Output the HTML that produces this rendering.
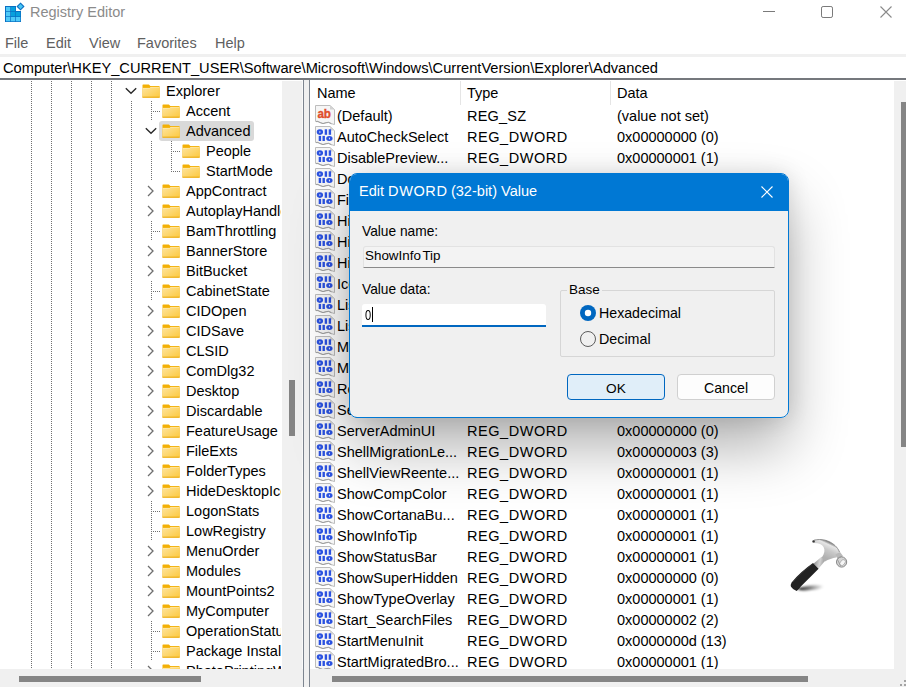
<!DOCTYPE html>
<html><head><meta charset="utf-8"><style>
*{margin:0;padding:0;box-sizing:border-box}
html,body{width:906px;height:687px;overflow:hidden;background:#fff;font-family:"Liberation Sans", sans-serif;position:relative}
div,svg{position:absolute}
.tb{left:30px;top:1px;line-height:23px;font-size:14.5px;color:#8b8b8b;white-space:nowrap}
.mn{top:31px;line-height:25px;font-size:14.5px;color:#606060;white-space:nowrap}
#addr{left:0;top:57px;width:906px;height:21px;background:#fff}
#addr .at{left:3px;top:1px;line-height:20px;font-size:14.65px;color:#000;white-space:nowrap}
#tree{left:0;top:81px;width:281px;height:588px;overflow:hidden;background:#fff}
#tree>*{}
.vd{width:1px;background:repeating-linear-gradient(to bottom,#707070 0 1px,transparent 1px 2px)}
.hd{height:1px;background:repeating-linear-gradient(to right,#707070 0 1px,transparent 1px 2px)}
.tt{line-height:20px;font-size:14.5px;color:#000;white-space:nowrap}
.sel{background:#d9d9d9;border-radius:3px}
#list{left:310px;top:81px;width:584px;height:588px;overflow:hidden;background:#fff}
.lt{line-height:21px;font-size:14.5px;color:#000;white-space:nowrap}
.dt{font-size:13.5px;line-height:19px;color:#000;white-space:nowrap}
.hsep{top:81px;width:1px;height:24px;background:#e5e5e5}
</style></head><body>
<svg width="0" height="0" style="position:absolute"><defs>
<linearGradient id="fg" x1="0" y1="0" x2="1" y2="1"><stop offset="0" stop-color="#fee49e"/><stop offset="1" stop-color="#fcc93f"/></linearGradient>
<g id="page"><path d="M0.5 0.5 H15 L19.5 4.6 V19.6 L16.5 18.6 Q13.5 16.4 11 17.6 Q8 19.4 5 17.4 Q2.5 15.6 0.5 16.4 Z" fill="#f6f6f6" stroke="#bdbdbd" stroke-width="1"/><path d="M15 0.5 V4.6 H19.5 Z" fill="#d2d2d2"/><path d="M1 16.6 Q3 16 5 17.6 Q8 19.6 11 17.8 Q13.5 16.6 16.5 18.8" fill="none" stroke="#9a9a9a" stroke-width="0.9"/></g>
<g id="bin" fill="#2b52e0"><path fill-rule="evenodd" d="M4.9 3.3 C7.2 3.3 8.1 4.6 8.1 6.1 C8.1 7.6 7.2 8.9 4.9 8.9 C2.6 8.9 1.7 7.6 1.7 6.1 C1.7 4.6 2.6 3.3 4.9 3.3 Z M4.9 5 C4.6 5 4.4 5.5 4.4 6.1 C4.4 6.7 4.6 7.2 4.9 7.2 C5.2 7.2 5.4 6.7 5.4 6.1 C5.4 5.5 5.2 5 4.9 5 Z"/><rect x="9.7" y="3.3" width="2.4" height="5.5"/><rect x="13.7" y="3.3" width="2.4" height="5.5"/><rect x="3.7" y="9.9" width="2.4" height="5.1"/><rect x="7.5" y="9.9" width="2.4" height="5.1"/><path fill-rule="evenodd" d="M14.4 9.9 C16.7 9.9 17.6 11.1 17.6 12.45 C17.6 13.8 16.7 15 14.4 15 C12.1 15 11.2 13.8 11.2 12.45 C11.2 11.1 12.1 9.9 14.4 9.9 Z M14.4 11.5 C14.1 11.5 13.9 11.9 13.9 12.45 C13.9 13 14.1 13.4 14.4 13.4 C14.7 13.4 14.9 13 14.9 12.45 C14.9 11.9 14.7 11.5 14.4 11.5 Z"/></g>
</defs></svg>
<!-- title bar -->
<svg style="left:4px;top:1px" width="22" height="22" viewBox="0 0 22 22">
<rect x="1" y="5" width="16" height="16" fill="#0a6fc2"/>
<rect x="2" y="6" width="4.3" height="4.3" fill="#4fc9f7"/><rect x="7" y="6" width="4.3" height="4.3" fill="#08a0dd"/>
<rect x="2" y="11" width="4.3" height="4.3" fill="#4fc9f7"/><rect x="7" y="11" width="4.3" height="4.3" fill="#08a0dd"/><rect x="12" y="11" width="4.3" height="4.3" fill="#08a0dd"/>
<rect x="2" y="16" width="4.3" height="4.3" fill="#4fc9f7"/><rect x="7" y="16" width="4.3" height="4.3" fill="#4fc9f7"/><rect x="12" y="16" width="4.3" height="4.3" fill="#4fc9f7"/>
<rect x="12" y="5" width="5" height="5" fill="#fff"/>
<path d="M16.5 2.2 L19.8 5.5 L16.5 8.8 L13.2 5.5 Z" fill="#48c6f5" stroke="#0a6fc2" stroke-width="1.1"/>
</svg>
<div class="tb">Registry Editor</div>
<svg style="left:763px;top:11px" width="12" height="1"><rect width="12" height="1" fill="#7a7a7a"/></svg>
<svg style="left:821px;top:6px" width="12" height="12" viewBox="0 0 12 12"><rect x="0.5" y="0.5" width="11" height="11" rx="1.6" fill="none" stroke="#7a7a7a" stroke-width="1"/></svg>
<svg style="left:880px;top:6px" width="12" height="12" viewBox="0 0 12 12"><path d="M0.5 0.5 L11.5 11.5 M11.5 0.5 L0.5 11.5" stroke="#8a8a8a" stroke-width="1.1"/></svg>
<!-- menu -->
<div class="mn" style="left:5px">File</div>
<div class="mn" style="left:46px">Edit</div>
<div class="mn" style="left:89px">View</div>
<div class="mn" style="left:137px">Favorites</div>
<div class="mn" style="left:215px">Help</div>
<div style="left:0;top:54px;width:906px;height:3px;background:#f0f0f0"></div>
<div id="addr"><div class="at">Computer\HKEY_CURRENT_USER\Software\Microsoft\Windows\CurrentVersion\Explorer\Advanced</div></div>
<div style="left:0;top:78px;width:906px;height:2px;background:#75787d"></div>
<!-- tree scrollbar & splitter -->
<div style="left:282px;top:81px;width:20px;height:606px;background:#f0f0f0"></div><div style="left:302px;top:80px;width:1px;height:607px;background:#fafafa"></div>
<div style="left:289px;top:380px;width:6px;height:56px;background:#858585"></div>
<div style="left:303px;top:80px;width:1px;height:607px;background:#7d8590"></div>
<div style="left:304px;top:80px;width:5px;height:607px;background:#f0f0f0"></div>
<div style="left:309px;top:80px;width:1px;height:607px;background:#7d8590"></div>
<!-- bottom scrollbars -->
<div style="left:0;top:669px;width:303px;height:18px;background:#f0f0f0"></div>
<div style="left:19px;top:676px;width:182px;height:6px;background:#858585"></div>
<div style="left:310px;top:669px;width:596px;height:18px;background:#f0f0f0"></div>
<div style="left:332px;top:676px;width:476px;height:6px;background:#858585"></div>
<div style="left:894px;top:81px;width:12px;height:606px;background:#f0f0f0"></div>
<div style="left:901px;top:102px;width:5px;height:345px;background:#858585"></div>
<div id="tree"><div style="left:0;top:-81px"><div class="vd" style="left:31px;top:81px;height:588px"></div><div class="vd" style="left:51px;top:81px;height:588px"></div><div class="vd" style="left:71px;top:81px;height:588px"></div><div class="vd" style="left:91px;top:81px;height:588px"></div><div class="vd" style="left:111px;top:81px;height:588px"></div><div class="vd" style="left:131px;top:101px;height:568px"></div><svg class="ch" style="left:125px;top:87px" width="12" height="8" viewBox="0 0 12 8"><path d="M0.8 1.2 L6 6.2 L11.2 1.2" fill="none" stroke="#2a2a2a" stroke-width="1.4"/></svg><svg class="fd" style="left:142px;top:84px" width="18" height="14" viewBox="0 0 18 14"><path d="M0.5 1.1 Q0.5 0.4 1.1 0.4 H6.9 L8.3 2 H17 Q17.6 2 17.6 2.6 V13 Q17.6 13.6 17 13.6 H1.1 Q0.5 13.6 0.5 13 Z" fill="#f3b006"/><path d="M0.5 4 H7.6 L8.7 3 H17.6 V13 Q17.6 13.6 17 13.6 H1.1 Q0.5 13.6 0.5 13 Z" fill="url(#fg)"/><path d="M0.6 4.3 H7.7 L8.8 3.3 H17.4" stroke="#fff1c4" stroke-width="0.6" fill="none" opacity="0.8"/><rect x="0.5" y="12.7" width="17.1" height="0.9" fill="#e8a70e"/></svg><div class="tt" style="left:166px;top:81px">Explorer</div><div class="vd" style="left:151px;top:101px;height:20px"></div><div class="hd" style="left:153px;top:111px;width:8px"></div><svg class="fd" style="left:162px;top:104px" width="18" height="14" viewBox="0 0 18 14"><path d="M0.5 1.1 Q0.5 0.4 1.1 0.4 H6.9 L8.3 2 H17 Q17.6 2 17.6 2.6 V13 Q17.6 13.6 17 13.6 H1.1 Q0.5 13.6 0.5 13 Z" fill="#f3b006"/><path d="M0.5 4 H7.6 L8.7 3 H17.6 V13 Q17.6 13.6 17 13.6 H1.1 Q0.5 13.6 0.5 13 Z" fill="url(#fg)"/><path d="M0.6 4.3 H7.7 L8.8 3.3 H17.4" stroke="#fff1c4" stroke-width="0.6" fill="none" opacity="0.8"/><rect x="0.5" y="12.7" width="17.1" height="0.9" fill="#e8a70e"/></svg><div class="tt" style="left:186px;top:101px">Accent</div><div class="sel" style="left:159px;top:121px;width:95px;height:20px"></div><svg class="ch" style="left:145px;top:127px" width="12" height="8" viewBox="0 0 12 8"><path d="M0.8 1.2 L6 6.2 L11.2 1.2" fill="none" stroke="#2a2a2a" stroke-width="1.4"/></svg><svg class="fd" style="left:162px;top:124px" width="18" height="14" viewBox="0 0 18 14"><path d="M0.5 1.1 Q0.5 0.4 1.1 0.4 H6.9 L8.3 2 H17 Q17.6 2 17.6 2.6 V13 Q17.6 13.6 17 13.6 H1.1 Q0.5 13.6 0.5 13 Z" fill="#f3b006"/><path d="M0.5 4 H7.6 L8.7 3 H17.6 V13 Q17.6 13.6 17 13.6 H1.1 Q0.5 13.6 0.5 13 Z" fill="url(#fg)"/><path d="M0.6 4.3 H7.7 L8.8 3.3 H17.4" stroke="#fff1c4" stroke-width="0.6" fill="none" opacity="0.8"/><rect x="0.5" y="12.7" width="17.1" height="0.9" fill="#e8a70e"/></svg><div class="tt" style="left:186px;top:121px">Advanced</div><div class="vd" style="left:171px;top:141px;height:20px"></div><div class="hd" style="left:173px;top:151px;width:8px"></div><div class="vd" style="left:151px;top:141px;height:20px"></div><svg class="fd" style="left:182px;top:144px" width="18" height="14" viewBox="0 0 18 14"><path d="M0.5 1.1 Q0.5 0.4 1.1 0.4 H6.9 L8.3 2 H17 Q17.6 2 17.6 2.6 V13 Q17.6 13.6 17 13.6 H1.1 Q0.5 13.6 0.5 13 Z" fill="#f3b006"/><path d="M0.5 4 H7.6 L8.7 3 H17.6 V13 Q17.6 13.6 17 13.6 H1.1 Q0.5 13.6 0.5 13 Z" fill="url(#fg)"/><path d="M0.6 4.3 H7.7 L8.8 3.3 H17.4" stroke="#fff1c4" stroke-width="0.6" fill="none" opacity="0.8"/><rect x="0.5" y="12.7" width="17.1" height="0.9" fill="#e8a70e"/></svg><div class="tt" style="left:206px;top:141px">People</div><div class="vd" style="left:171px;top:161px;height:11px"></div><div class="hd" style="left:173px;top:171px;width:8px"></div><div class="vd" style="left:151px;top:161px;height:20px"></div><svg class="fd" style="left:182px;top:164px" width="18" height="14" viewBox="0 0 18 14"><path d="M0.5 1.1 Q0.5 0.4 1.1 0.4 H6.9 L8.3 2 H17 Q17.6 2 17.6 2.6 V13 Q17.6 13.6 17 13.6 H1.1 Q0.5 13.6 0.5 13 Z" fill="#f3b006"/><path d="M0.5 4 H7.6 L8.7 3 H17.6 V13 Q17.6 13.6 17 13.6 H1.1 Q0.5 13.6 0.5 13 Z" fill="url(#fg)"/><path d="M0.6 4.3 H7.7 L8.8 3.3 H17.4" stroke="#fff1c4" stroke-width="0.6" fill="none" opacity="0.8"/><rect x="0.5" y="12.7" width="17.1" height="0.9" fill="#e8a70e"/></svg><div class="tt" style="left:206px;top:161px">StartMode</div><svg class="ch" style="left:147px;top:185px" width="8" height="12" viewBox="0 0 8 12"><path d="M1 1 L6 6 L1 11" fill="none" stroke="#6e6e6e" stroke-width="1.3"/></svg><svg class="fd" style="left:162px;top:184px" width="18" height="14" viewBox="0 0 18 14"><path d="M0.5 1.1 Q0.5 0.4 1.1 0.4 H6.9 L8.3 2 H17 Q17.6 2 17.6 2.6 V13 Q17.6 13.6 17 13.6 H1.1 Q0.5 13.6 0.5 13 Z" fill="#f3b006"/><path d="M0.5 4 H7.6 L8.7 3 H17.6 V13 Q17.6 13.6 17 13.6 H1.1 Q0.5 13.6 0.5 13 Z" fill="url(#fg)"/><path d="M0.6 4.3 H7.7 L8.8 3.3 H17.4" stroke="#fff1c4" stroke-width="0.6" fill="none" opacity="0.8"/><rect x="0.5" y="12.7" width="17.1" height="0.9" fill="#e8a70e"/></svg><div class="tt" style="left:186px;top:181px">AppContract</div><svg class="ch" style="left:147px;top:205px" width="8" height="12" viewBox="0 0 8 12"><path d="M1 1 L6 6 L1 11" fill="none" stroke="#6e6e6e" stroke-width="1.3"/></svg><svg class="fd" style="left:162px;top:204px" width="18" height="14" viewBox="0 0 18 14"><path d="M0.5 1.1 Q0.5 0.4 1.1 0.4 H6.9 L8.3 2 H17 Q17.6 2 17.6 2.6 V13 Q17.6 13.6 17 13.6 H1.1 Q0.5 13.6 0.5 13 Z" fill="#f3b006"/><path d="M0.5 4 H7.6 L8.7 3 H17.6 V13 Q17.6 13.6 17 13.6 H1.1 Q0.5 13.6 0.5 13 Z" fill="url(#fg)"/><path d="M0.6 4.3 H7.7 L8.8 3.3 H17.4" stroke="#fff1c4" stroke-width="0.6" fill="none" opacity="0.8"/><rect x="0.5" y="12.7" width="17.1" height="0.9" fill="#e8a70e"/></svg><div class="tt" style="left:186px;top:201px">AutoplayHandlers</div><div class="vd" style="left:151px;top:221px;height:20px"></div><div class="hd" style="left:153px;top:231px;width:8px"></div><svg class="fd" style="left:162px;top:224px" width="18" height="14" viewBox="0 0 18 14"><path d="M0.5 1.1 Q0.5 0.4 1.1 0.4 H6.9 L8.3 2 H17 Q17.6 2 17.6 2.6 V13 Q17.6 13.6 17 13.6 H1.1 Q0.5 13.6 0.5 13 Z" fill="#f3b006"/><path d="M0.5 4 H7.6 L8.7 3 H17.6 V13 Q17.6 13.6 17 13.6 H1.1 Q0.5 13.6 0.5 13 Z" fill="url(#fg)"/><path d="M0.6 4.3 H7.7 L8.8 3.3 H17.4" stroke="#fff1c4" stroke-width="0.6" fill="none" opacity="0.8"/><rect x="0.5" y="12.7" width="17.1" height="0.9" fill="#e8a70e"/></svg><div class="tt" style="left:186px;top:221px">BamThrottling</div><svg class="ch" style="left:147px;top:245px" width="8" height="12" viewBox="0 0 8 12"><path d="M1 1 L6 6 L1 11" fill="none" stroke="#6e6e6e" stroke-width="1.3"/></svg><svg class="fd" style="left:162px;top:244px" width="18" height="14" viewBox="0 0 18 14"><path d="M0.5 1.1 Q0.5 0.4 1.1 0.4 H6.9 L8.3 2 H17 Q17.6 2 17.6 2.6 V13 Q17.6 13.6 17 13.6 H1.1 Q0.5 13.6 0.5 13 Z" fill="#f3b006"/><path d="M0.5 4 H7.6 L8.7 3 H17.6 V13 Q17.6 13.6 17 13.6 H1.1 Q0.5 13.6 0.5 13 Z" fill="url(#fg)"/><path d="M0.6 4.3 H7.7 L8.8 3.3 H17.4" stroke="#fff1c4" stroke-width="0.6" fill="none" opacity="0.8"/><rect x="0.5" y="12.7" width="17.1" height="0.9" fill="#e8a70e"/></svg><div class="tt" style="left:186px;top:241px">BannerStore</div><svg class="ch" style="left:147px;top:265px" width="8" height="12" viewBox="0 0 8 12"><path d="M1 1 L6 6 L1 11" fill="none" stroke="#6e6e6e" stroke-width="1.3"/></svg><svg class="fd" style="left:162px;top:264px" width="18" height="14" viewBox="0 0 18 14"><path d="M0.5 1.1 Q0.5 0.4 1.1 0.4 H6.9 L8.3 2 H17 Q17.6 2 17.6 2.6 V13 Q17.6 13.6 17 13.6 H1.1 Q0.5 13.6 0.5 13 Z" fill="#f3b006"/><path d="M0.5 4 H7.6 L8.7 3 H17.6 V13 Q17.6 13.6 17 13.6 H1.1 Q0.5 13.6 0.5 13 Z" fill="url(#fg)"/><path d="M0.6 4.3 H7.7 L8.8 3.3 H17.4" stroke="#fff1c4" stroke-width="0.6" fill="none" opacity="0.8"/><rect x="0.5" y="12.7" width="17.1" height="0.9" fill="#e8a70e"/></svg><div class="tt" style="left:186px;top:261px">BitBucket</div><div class="vd" style="left:151px;top:281px;height:20px"></div><div class="hd" style="left:153px;top:291px;width:8px"></div><svg class="fd" style="left:162px;top:284px" width="18" height="14" viewBox="0 0 18 14"><path d="M0.5 1.1 Q0.5 0.4 1.1 0.4 H6.9 L8.3 2 H17 Q17.6 2 17.6 2.6 V13 Q17.6 13.6 17 13.6 H1.1 Q0.5 13.6 0.5 13 Z" fill="#f3b006"/><path d="M0.5 4 H7.6 L8.7 3 H17.6 V13 Q17.6 13.6 17 13.6 H1.1 Q0.5 13.6 0.5 13 Z" fill="url(#fg)"/><path d="M0.6 4.3 H7.7 L8.8 3.3 H17.4" stroke="#fff1c4" stroke-width="0.6" fill="none" opacity="0.8"/><rect x="0.5" y="12.7" width="17.1" height="0.9" fill="#e8a70e"/></svg><div class="tt" style="left:186px;top:281px">CabinetState</div><svg class="ch" style="left:147px;top:305px" width="8" height="12" viewBox="0 0 8 12"><path d="M1 1 L6 6 L1 11" fill="none" stroke="#6e6e6e" stroke-width="1.3"/></svg><svg class="fd" style="left:162px;top:304px" width="18" height="14" viewBox="0 0 18 14"><path d="M0.5 1.1 Q0.5 0.4 1.1 0.4 H6.9 L8.3 2 H17 Q17.6 2 17.6 2.6 V13 Q17.6 13.6 17 13.6 H1.1 Q0.5 13.6 0.5 13 Z" fill="#f3b006"/><path d="M0.5 4 H7.6 L8.7 3 H17.6 V13 Q17.6 13.6 17 13.6 H1.1 Q0.5 13.6 0.5 13 Z" fill="url(#fg)"/><path d="M0.6 4.3 H7.7 L8.8 3.3 H17.4" stroke="#fff1c4" stroke-width="0.6" fill="none" opacity="0.8"/><rect x="0.5" y="12.7" width="17.1" height="0.9" fill="#e8a70e"/></svg><div class="tt" style="left:186px;top:301px">CIDOpen</div><svg class="ch" style="left:147px;top:325px" width="8" height="12" viewBox="0 0 8 12"><path d="M1 1 L6 6 L1 11" fill="none" stroke="#6e6e6e" stroke-width="1.3"/></svg><svg class="fd" style="left:162px;top:324px" width="18" height="14" viewBox="0 0 18 14"><path d="M0.5 1.1 Q0.5 0.4 1.1 0.4 H6.9 L8.3 2 H17 Q17.6 2 17.6 2.6 V13 Q17.6 13.6 17 13.6 H1.1 Q0.5 13.6 0.5 13 Z" fill="#f3b006"/><path d="M0.5 4 H7.6 L8.7 3 H17.6 V13 Q17.6 13.6 17 13.6 H1.1 Q0.5 13.6 0.5 13 Z" fill="url(#fg)"/><path d="M0.6 4.3 H7.7 L8.8 3.3 H17.4" stroke="#fff1c4" stroke-width="0.6" fill="none" opacity="0.8"/><rect x="0.5" y="12.7" width="17.1" height="0.9" fill="#e8a70e"/></svg><div class="tt" style="left:186px;top:321px">CIDSave</div><svg class="ch" style="left:147px;top:345px" width="8" height="12" viewBox="0 0 8 12"><path d="M1 1 L6 6 L1 11" fill="none" stroke="#6e6e6e" stroke-width="1.3"/></svg><svg class="fd" style="left:162px;top:344px" width="18" height="14" viewBox="0 0 18 14"><path d="M0.5 1.1 Q0.5 0.4 1.1 0.4 H6.9 L8.3 2 H17 Q17.6 2 17.6 2.6 V13 Q17.6 13.6 17 13.6 H1.1 Q0.5 13.6 0.5 13 Z" fill="#f3b006"/><path d="M0.5 4 H7.6 L8.7 3 H17.6 V13 Q17.6 13.6 17 13.6 H1.1 Q0.5 13.6 0.5 13 Z" fill="url(#fg)"/><path d="M0.6 4.3 H7.7 L8.8 3.3 H17.4" stroke="#fff1c4" stroke-width="0.6" fill="none" opacity="0.8"/><rect x="0.5" y="12.7" width="17.1" height="0.9" fill="#e8a70e"/></svg><div class="tt" style="left:186px;top:341px">CLSID</div><svg class="ch" style="left:147px;top:365px" width="8" height="12" viewBox="0 0 8 12"><path d="M1 1 L6 6 L1 11" fill="none" stroke="#6e6e6e" stroke-width="1.3"/></svg><svg class="fd" style="left:162px;top:364px" width="18" height="14" viewBox="0 0 18 14"><path d="M0.5 1.1 Q0.5 0.4 1.1 0.4 H6.9 L8.3 2 H17 Q17.6 2 17.6 2.6 V13 Q17.6 13.6 17 13.6 H1.1 Q0.5 13.6 0.5 13 Z" fill="#f3b006"/><path d="M0.5 4 H7.6 L8.7 3 H17.6 V13 Q17.6 13.6 17 13.6 H1.1 Q0.5 13.6 0.5 13 Z" fill="url(#fg)"/><path d="M0.6 4.3 H7.7 L8.8 3.3 H17.4" stroke="#fff1c4" stroke-width="0.6" fill="none" opacity="0.8"/><rect x="0.5" y="12.7" width="17.1" height="0.9" fill="#e8a70e"/></svg><div class="tt" style="left:186px;top:361px">ComDlg32</div><svg class="ch" style="left:147px;top:385px" width="8" height="12" viewBox="0 0 8 12"><path d="M1 1 L6 6 L1 11" fill="none" stroke="#6e6e6e" stroke-width="1.3"/></svg><svg class="fd" style="left:162px;top:384px" width="18" height="14" viewBox="0 0 18 14"><path d="M0.5 1.1 Q0.5 0.4 1.1 0.4 H6.9 L8.3 2 H17 Q17.6 2 17.6 2.6 V13 Q17.6 13.6 17 13.6 H1.1 Q0.5 13.6 0.5 13 Z" fill="#f3b006"/><path d="M0.5 4 H7.6 L8.7 3 H17.6 V13 Q17.6 13.6 17 13.6 H1.1 Q0.5 13.6 0.5 13 Z" fill="url(#fg)"/><path d="M0.6 4.3 H7.7 L8.8 3.3 H17.4" stroke="#fff1c4" stroke-width="0.6" fill="none" opacity="0.8"/><rect x="0.5" y="12.7" width="17.1" height="0.9" fill="#e8a70e"/></svg><div class="tt" style="left:186px;top:381px">Desktop</div><svg class="ch" style="left:147px;top:405px" width="8" height="12" viewBox="0 0 8 12"><path d="M1 1 L6 6 L1 11" fill="none" stroke="#6e6e6e" stroke-width="1.3"/></svg><svg class="fd" style="left:162px;top:404px" width="18" height="14" viewBox="0 0 18 14"><path d="M0.5 1.1 Q0.5 0.4 1.1 0.4 H6.9 L8.3 2 H17 Q17.6 2 17.6 2.6 V13 Q17.6 13.6 17 13.6 H1.1 Q0.5 13.6 0.5 13 Z" fill="#f3b006"/><path d="M0.5 4 H7.6 L8.7 3 H17.6 V13 Q17.6 13.6 17 13.6 H1.1 Q0.5 13.6 0.5 13 Z" fill="url(#fg)"/><path d="M0.6 4.3 H7.7 L8.8 3.3 H17.4" stroke="#fff1c4" stroke-width="0.6" fill="none" opacity="0.8"/><rect x="0.5" y="12.7" width="17.1" height="0.9" fill="#e8a70e"/></svg><div class="tt" style="left:186px;top:401px">Discardable</div><svg class="ch" style="left:147px;top:425px" width="8" height="12" viewBox="0 0 8 12"><path d="M1 1 L6 6 L1 11" fill="none" stroke="#6e6e6e" stroke-width="1.3"/></svg><svg class="fd" style="left:162px;top:424px" width="18" height="14" viewBox="0 0 18 14"><path d="M0.5 1.1 Q0.5 0.4 1.1 0.4 H6.9 L8.3 2 H17 Q17.6 2 17.6 2.6 V13 Q17.6 13.6 17 13.6 H1.1 Q0.5 13.6 0.5 13 Z" fill="#f3b006"/><path d="M0.5 4 H7.6 L8.7 3 H17.6 V13 Q17.6 13.6 17 13.6 H1.1 Q0.5 13.6 0.5 13 Z" fill="url(#fg)"/><path d="M0.6 4.3 H7.7 L8.8 3.3 H17.4" stroke="#fff1c4" stroke-width="0.6" fill="none" opacity="0.8"/><rect x="0.5" y="12.7" width="17.1" height="0.9" fill="#e8a70e"/></svg><div class="tt" style="left:186px;top:421px">FeatureUsage</div><svg class="ch" style="left:147px;top:445px" width="8" height="12" viewBox="0 0 8 12"><path d="M1 1 L6 6 L1 11" fill="none" stroke="#6e6e6e" stroke-width="1.3"/></svg><svg class="fd" style="left:162px;top:444px" width="18" height="14" viewBox="0 0 18 14"><path d="M0.5 1.1 Q0.5 0.4 1.1 0.4 H6.9 L8.3 2 H17 Q17.6 2 17.6 2.6 V13 Q17.6 13.6 17 13.6 H1.1 Q0.5 13.6 0.5 13 Z" fill="#f3b006"/><path d="M0.5 4 H7.6 L8.7 3 H17.6 V13 Q17.6 13.6 17 13.6 H1.1 Q0.5 13.6 0.5 13 Z" fill="url(#fg)"/><path d="M0.6 4.3 H7.7 L8.8 3.3 H17.4" stroke="#fff1c4" stroke-width="0.6" fill="none" opacity="0.8"/><rect x="0.5" y="12.7" width="17.1" height="0.9" fill="#e8a70e"/></svg><div class="tt" style="left:186px;top:441px">FileExts</div><svg class="ch" style="left:147px;top:465px" width="8" height="12" viewBox="0 0 8 12"><path d="M1 1 L6 6 L1 11" fill="none" stroke="#6e6e6e" stroke-width="1.3"/></svg><svg class="fd" style="left:162px;top:464px" width="18" height="14" viewBox="0 0 18 14"><path d="M0.5 1.1 Q0.5 0.4 1.1 0.4 H6.9 L8.3 2 H17 Q17.6 2 17.6 2.6 V13 Q17.6 13.6 17 13.6 H1.1 Q0.5 13.6 0.5 13 Z" fill="#f3b006"/><path d="M0.5 4 H7.6 L8.7 3 H17.6 V13 Q17.6 13.6 17 13.6 H1.1 Q0.5 13.6 0.5 13 Z" fill="url(#fg)"/><path d="M0.6 4.3 H7.7 L8.8 3.3 H17.4" stroke="#fff1c4" stroke-width="0.6" fill="none" opacity="0.8"/><rect x="0.5" y="12.7" width="17.1" height="0.9" fill="#e8a70e"/></svg><div class="tt" style="left:186px;top:461px">FolderTypes</div><svg class="ch" style="left:147px;top:485px" width="8" height="12" viewBox="0 0 8 12"><path d="M1 1 L6 6 L1 11" fill="none" stroke="#6e6e6e" stroke-width="1.3"/></svg><svg class="fd" style="left:162px;top:484px" width="18" height="14" viewBox="0 0 18 14"><path d="M0.5 1.1 Q0.5 0.4 1.1 0.4 H6.9 L8.3 2 H17 Q17.6 2 17.6 2.6 V13 Q17.6 13.6 17 13.6 H1.1 Q0.5 13.6 0.5 13 Z" fill="#f3b006"/><path d="M0.5 4 H7.6 L8.7 3 H17.6 V13 Q17.6 13.6 17 13.6 H1.1 Q0.5 13.6 0.5 13 Z" fill="url(#fg)"/><path d="M0.6 4.3 H7.7 L8.8 3.3 H17.4" stroke="#fff1c4" stroke-width="0.6" fill="none" opacity="0.8"/><rect x="0.5" y="12.7" width="17.1" height="0.9" fill="#e8a70e"/></svg><div class="tt" style="left:186px;top:481px">HideDesktopIcons</div><div class="vd" style="left:151px;top:501px;height:20px"></div><div class="hd" style="left:153px;top:511px;width:8px"></div><svg class="fd" style="left:162px;top:504px" width="18" height="14" viewBox="0 0 18 14"><path d="M0.5 1.1 Q0.5 0.4 1.1 0.4 H6.9 L8.3 2 H17 Q17.6 2 17.6 2.6 V13 Q17.6 13.6 17 13.6 H1.1 Q0.5 13.6 0.5 13 Z" fill="#f3b006"/><path d="M0.5 4 H7.6 L8.7 3 H17.6 V13 Q17.6 13.6 17 13.6 H1.1 Q0.5 13.6 0.5 13 Z" fill="url(#fg)"/><path d="M0.6 4.3 H7.7 L8.8 3.3 H17.4" stroke="#fff1c4" stroke-width="0.6" fill="none" opacity="0.8"/><rect x="0.5" y="12.7" width="17.1" height="0.9" fill="#e8a70e"/></svg><div class="tt" style="left:186px;top:501px">LogonStats</div><div class="vd" style="left:151px;top:521px;height:20px"></div><div class="hd" style="left:153px;top:531px;width:8px"></div><svg class="fd" style="left:162px;top:524px" width="18" height="14" viewBox="0 0 18 14"><path d="M0.5 1.1 Q0.5 0.4 1.1 0.4 H6.9 L8.3 2 H17 Q17.6 2 17.6 2.6 V13 Q17.6 13.6 17 13.6 H1.1 Q0.5 13.6 0.5 13 Z" fill="#f3b006"/><path d="M0.5 4 H7.6 L8.7 3 H17.6 V13 Q17.6 13.6 17 13.6 H1.1 Q0.5 13.6 0.5 13 Z" fill="url(#fg)"/><path d="M0.6 4.3 H7.7 L8.8 3.3 H17.4" stroke="#fff1c4" stroke-width="0.6" fill="none" opacity="0.8"/><rect x="0.5" y="12.7" width="17.1" height="0.9" fill="#e8a70e"/></svg><div class="tt" style="left:186px;top:521px">LowRegistry</div><svg class="ch" style="left:147px;top:545px" width="8" height="12" viewBox="0 0 8 12"><path d="M1 1 L6 6 L1 11" fill="none" stroke="#6e6e6e" stroke-width="1.3"/></svg><svg class="fd" style="left:162px;top:544px" width="18" height="14" viewBox="0 0 18 14"><path d="M0.5 1.1 Q0.5 0.4 1.1 0.4 H6.9 L8.3 2 H17 Q17.6 2 17.6 2.6 V13 Q17.6 13.6 17 13.6 H1.1 Q0.5 13.6 0.5 13 Z" fill="#f3b006"/><path d="M0.5 4 H7.6 L8.7 3 H17.6 V13 Q17.6 13.6 17 13.6 H1.1 Q0.5 13.6 0.5 13 Z" fill="url(#fg)"/><path d="M0.6 4.3 H7.7 L8.8 3.3 H17.4" stroke="#fff1c4" stroke-width="0.6" fill="none" opacity="0.8"/><rect x="0.5" y="12.7" width="17.1" height="0.9" fill="#e8a70e"/></svg><div class="tt" style="left:186px;top:541px">MenuOrder</div><svg class="ch" style="left:147px;top:565px" width="8" height="12" viewBox="0 0 8 12"><path d="M1 1 L6 6 L1 11" fill="none" stroke="#6e6e6e" stroke-width="1.3"/></svg><svg class="fd" style="left:162px;top:564px" width="18" height="14" viewBox="0 0 18 14"><path d="M0.5 1.1 Q0.5 0.4 1.1 0.4 H6.9 L8.3 2 H17 Q17.6 2 17.6 2.6 V13 Q17.6 13.6 17 13.6 H1.1 Q0.5 13.6 0.5 13 Z" fill="#f3b006"/><path d="M0.5 4 H7.6 L8.7 3 H17.6 V13 Q17.6 13.6 17 13.6 H1.1 Q0.5 13.6 0.5 13 Z" fill="url(#fg)"/><path d="M0.6 4.3 H7.7 L8.8 3.3 H17.4" stroke="#fff1c4" stroke-width="0.6" fill="none" opacity="0.8"/><rect x="0.5" y="12.7" width="17.1" height="0.9" fill="#e8a70e"/></svg><div class="tt" style="left:186px;top:561px">Modules</div><svg class="ch" style="left:147px;top:585px" width="8" height="12" viewBox="0 0 8 12"><path d="M1 1 L6 6 L1 11" fill="none" stroke="#6e6e6e" stroke-width="1.3"/></svg><svg class="fd" style="left:162px;top:584px" width="18" height="14" viewBox="0 0 18 14"><path d="M0.5 1.1 Q0.5 0.4 1.1 0.4 H6.9 L8.3 2 H17 Q17.6 2 17.6 2.6 V13 Q17.6 13.6 17 13.6 H1.1 Q0.5 13.6 0.5 13 Z" fill="#f3b006"/><path d="M0.5 4 H7.6 L8.7 3 H17.6 V13 Q17.6 13.6 17 13.6 H1.1 Q0.5 13.6 0.5 13 Z" fill="url(#fg)"/><path d="M0.6 4.3 H7.7 L8.8 3.3 H17.4" stroke="#fff1c4" stroke-width="0.6" fill="none" opacity="0.8"/><rect x="0.5" y="12.7" width="17.1" height="0.9" fill="#e8a70e"/></svg><div class="tt" style="left:186px;top:581px">MountPoints2</div><svg class="ch" style="left:147px;top:605px" width="8" height="12" viewBox="0 0 8 12"><path d="M1 1 L6 6 L1 11" fill="none" stroke="#6e6e6e" stroke-width="1.3"/></svg><svg class="fd" style="left:162px;top:604px" width="18" height="14" viewBox="0 0 18 14"><path d="M0.5 1.1 Q0.5 0.4 1.1 0.4 H6.9 L8.3 2 H17 Q17.6 2 17.6 2.6 V13 Q17.6 13.6 17 13.6 H1.1 Q0.5 13.6 0.5 13 Z" fill="#f3b006"/><path d="M0.5 4 H7.6 L8.7 3 H17.6 V13 Q17.6 13.6 17 13.6 H1.1 Q0.5 13.6 0.5 13 Z" fill="url(#fg)"/><path d="M0.6 4.3 H7.7 L8.8 3.3 H17.4" stroke="#fff1c4" stroke-width="0.6" fill="none" opacity="0.8"/><rect x="0.5" y="12.7" width="17.1" height="0.9" fill="#e8a70e"/></svg><div class="tt" style="left:186px;top:601px">MyComputer</div><div class="vd" style="left:151px;top:621px;height:20px"></div><div class="hd" style="left:153px;top:631px;width:8px"></div><svg class="fd" style="left:162px;top:624px" width="18" height="14" viewBox="0 0 18 14"><path d="M0.5 1.1 Q0.5 0.4 1.1 0.4 H6.9 L8.3 2 H17 Q17.6 2 17.6 2.6 V13 Q17.6 13.6 17 13.6 H1.1 Q0.5 13.6 0.5 13 Z" fill="#f3b006"/><path d="M0.5 4 H7.6 L8.7 3 H17.6 V13 Q17.6 13.6 17 13.6 H1.1 Q0.5 13.6 0.5 13 Z" fill="url(#fg)"/><path d="M0.6 4.3 H7.7 L8.8 3.3 H17.4" stroke="#fff1c4" stroke-width="0.6" fill="none" opacity="0.8"/><rect x="0.5" y="12.7" width="17.1" height="0.9" fill="#e8a70e"/></svg><div class="tt" style="left:186px;top:621px">OperationStatusManager</div><div class="vd" style="left:151px;top:641px;height:20px"></div><div class="hd" style="left:153px;top:651px;width:8px"></div><svg class="fd" style="left:162px;top:644px" width="18" height="14" viewBox="0 0 18 14"><path d="M0.5 1.1 Q0.5 0.4 1.1 0.4 H6.9 L8.3 2 H17 Q17.6 2 17.6 2.6 V13 Q17.6 13.6 17 13.6 H1.1 Q0.5 13.6 0.5 13 Z" fill="#f3b006"/><path d="M0.5 4 H7.6 L8.7 3 H17.6 V13 Q17.6 13.6 17 13.6 H1.1 Q0.5 13.6 0.5 13 Z" fill="url(#fg)"/><path d="M0.6 4.3 H7.7 L8.8 3.3 H17.4" stroke="#fff1c4" stroke-width="0.6" fill="none" opacity="0.8"/><rect x="0.5" y="12.7" width="17.1" height="0.9" fill="#e8a70e"/></svg><div class="tt" style="left:186px;top:641px">Package Installation</div><svg class="ch" style="left:147px;top:665px" width="8" height="12" viewBox="0 0 8 12"><path d="M1 1 L6 6 L1 11" fill="none" stroke="#6e6e6e" stroke-width="1.3"/></svg><svg class="fd" style="left:162px;top:664px" width="18" height="14" viewBox="0 0 18 14"><path d="M0.5 1.1 Q0.5 0.4 1.1 0.4 H6.9 L8.3 2 H17 Q17.6 2 17.6 2.6 V13 Q17.6 13.6 17 13.6 H1.1 Q0.5 13.6 0.5 13 Z" fill="#f3b006"/><path d="M0.5 4 H7.6 L8.7 3 H17.6 V13 Q17.6 13.6 17 13.6 H1.1 Q0.5 13.6 0.5 13 Z" fill="url(#fg)"/><path d="M0.6 4.3 H7.7 L8.8 3.3 H17.4" stroke="#fff1c4" stroke-width="0.6" fill="none" opacity="0.8"/><rect x="0.5" y="12.7" width="17.1" height="0.9" fill="#e8a70e"/></svg><div class="tt" style="left:186px;top:661px">PhotoPrintingWizard</div></div></div>
<div id="list"><div style="left:-310px;top:-81px"><div class="lt" style="left:317px;top:83px">Name</div><div class="lt" style="left:467px;top:83px">Type</div><div class="lt" style="left:617px;top:83px">Data</div><div class="hsep" style="left:460px"></div><div class="hsep" style="left:610px"></div><svg class="ic" style="left:315px;top:105px" width="20" height="20" viewBox="0 0 20 20"><use href="#page"/><text x="2.4" y="12.6" font-family="Liberation Sans" font-weight="bold" font-size="12" fill="#e04e2b" stroke="#e04e2b" stroke-width="0.35" textLength="13.6" lengthAdjust="spacingAndGlyphs">ab</text></svg><div class="lt" style="left:337px;top:106px">(Default)</div><div class="lt" style="left:467px;top:106px;letter-spacing:0.2px">REG_SZ</div><div class="lt" style="left:617px;top:106px">(value not set)</div><svg class="ic" style="left:315px;top:126px" width="20" height="20" viewBox="0 0 20 20"><use href="#page"/><use href="#bin"/></svg><div class="lt" style="left:337px;top:127px">AutoCheckSelect</div><div class="lt" style="left:467px;top:127px;letter-spacing:0.55px">REG_DWORD</div><div class="lt" style="left:617px;top:127px">0x00000000 (0)</div><svg class="ic" style="left:315px;top:147px" width="20" height="20" viewBox="0 0 20 20"><use href="#page"/><use href="#bin"/></svg><div class="lt" style="left:337px;top:148px">DisablePreview...</div><div class="lt" style="left:467px;top:148px;letter-spacing:0.55px">REG_DWORD</div><div class="lt" style="left:617px;top:148px">0x00000001 (1)</div><svg class="ic" style="left:315px;top:168px" width="20" height="20" viewBox="0 0 20 20"><use href="#page"/><use href="#bin"/></svg><div class="lt" style="left:337px;top:169px">DontPrettyPath</div><div class="lt" style="left:467px;top:169px;letter-spacing:0.55px">REG_DWORD</div><div class="lt" style="left:617px;top:169px">0x00000000 (0)</div><svg class="ic" style="left:315px;top:189px" width="20" height="20" viewBox="0 0 20 20"><use href="#page"/><use href="#bin"/></svg><div class="lt" style="left:337px;top:190px">Filter</div><div class="lt" style="left:467px;top:190px;letter-spacing:0.55px">REG_DWORD</div><div class="lt" style="left:617px;top:190px">0x00000000 (0)</div><svg class="ic" style="left:315px;top:210px" width="20" height="20" viewBox="0 0 20 20"><use href="#page"/><use href="#bin"/></svg><div class="lt" style="left:337px;top:211px">HideFileExt</div><div class="lt" style="left:467px;top:211px;letter-spacing:0.55px">REG_DWORD</div><div class="lt" style="left:617px;top:211px">0x00000001 (1)</div><svg class="ic" style="left:315px;top:231px" width="20" height="20" viewBox="0 0 20 20"><use href="#page"/><use href="#bin"/></svg><div class="lt" style="left:337px;top:232px">HideIcons</div><div class="lt" style="left:467px;top:232px;letter-spacing:0.55px">REG_DWORD</div><div class="lt" style="left:617px;top:232px">0x00000000 (0)</div><svg class="ic" style="left:315px;top:252px" width="20" height="20" viewBox="0 0 20 20"><use href="#page"/><use href="#bin"/></svg><div class="lt" style="left:337px;top:253px">HideMergeConfl...</div><div class="lt" style="left:467px;top:253px;letter-spacing:0.55px">REG_DWORD</div><div class="lt" style="left:617px;top:253px">0x00000000 (0)</div><svg class="ic" style="left:315px;top:273px" width="20" height="20" viewBox="0 0 20 20"><use href="#page"/><use href="#bin"/></svg><div class="lt" style="left:337px;top:274px">IconsOnly</div><div class="lt" style="left:467px;top:274px;letter-spacing:0.55px">REG_DWORD</div><div class="lt" style="left:617px;top:274px">0x00000000 (0)</div><svg class="ic" style="left:315px;top:294px" width="20" height="20" viewBox="0 0 20 20"><use href="#page"/><use href="#bin"/></svg><div class="lt" style="left:337px;top:295px">ListviewAlphaS...</div><div class="lt" style="left:467px;top:295px;letter-spacing:0.55px">REG_DWORD</div><div class="lt" style="left:617px;top:295px">0x00000001 (1)</div><svg class="ic" style="left:315px;top:315px" width="20" height="20" viewBox="0 0 20 20"><use href="#page"/><use href="#bin"/></svg><div class="lt" style="left:337px;top:316px">ListviewShadow</div><div class="lt" style="left:467px;top:316px;letter-spacing:0.55px">REG_DWORD</div><div class="lt" style="left:617px;top:316px">0x00000001 (1)</div><svg class="ic" style="left:315px;top:336px" width="20" height="20" viewBox="0 0 20 20"><use href="#page"/><use href="#bin"/></svg><div class="lt" style="left:337px;top:337px">MapNetDrvBtn</div><div class="lt" style="left:467px;top:337px;letter-spacing:0.55px">REG_DWORD</div><div class="lt" style="left:617px;top:337px">0x00000000 (0)</div><svg class="ic" style="left:315px;top:357px" width="20" height="20" viewBox="0 0 20 20"><use href="#page"/><use href="#bin"/></svg><div class="lt" style="left:337px;top:358px">MMTaskbarGlo...</div><div class="lt" style="left:467px;top:358px;letter-spacing:0.55px">REG_DWORD</div><div class="lt" style="left:617px;top:358px">0x00000000 (0)</div><svg class="ic" style="left:315px;top:378px" width="20" height="20" viewBox="0 0 20 20"><use href="#page"/><use href="#bin"/></svg><div class="lt" style="left:337px;top:379px">ReindexedProfile</div><div class="lt" style="left:467px;top:379px;letter-spacing:0.55px">REG_DWORD</div><div class="lt" style="left:617px;top:379px">0x00000001 (1)</div><svg class="ic" style="left:315px;top:399px" width="20" height="20" viewBox="0 0 20 20"><use href="#page"/><use href="#bin"/></svg><div class="lt" style="left:337px;top:400px">SeparateProcess</div><div class="lt" style="left:467px;top:400px;letter-spacing:0.55px">REG_DWORD</div><div class="lt" style="left:617px;top:400px">0x00000000 (0)</div><svg class="ic" style="left:315px;top:420px" width="20" height="20" viewBox="0 0 20 20"><use href="#page"/><use href="#bin"/></svg><div class="lt" style="left:337px;top:421px">ServerAdminUI</div><div class="lt" style="left:467px;top:421px;letter-spacing:0.55px">REG_DWORD</div><div class="lt" style="left:617px;top:421px">0x00000000 (0)</div><svg class="ic" style="left:315px;top:441px" width="20" height="20" viewBox="0 0 20 20"><use href="#page"/><use href="#bin"/></svg><div class="lt" style="left:337px;top:442px">ShellMigrationLe...</div><div class="lt" style="left:467px;top:442px;letter-spacing:0.55px">REG_DWORD</div><div class="lt" style="left:617px;top:442px">0x00000003 (3)</div><svg class="ic" style="left:315px;top:462px" width="20" height="20" viewBox="0 0 20 20"><use href="#page"/><use href="#bin"/></svg><div class="lt" style="left:337px;top:463px">ShellViewReente...</div><div class="lt" style="left:467px;top:463px;letter-spacing:0.55px">REG_DWORD</div><div class="lt" style="left:617px;top:463px">0x00000001 (1)</div><svg class="ic" style="left:315px;top:483px" width="20" height="20" viewBox="0 0 20 20"><use href="#page"/><use href="#bin"/></svg><div class="lt" style="left:337px;top:484px">ShowCompColor</div><div class="lt" style="left:467px;top:484px;letter-spacing:0.55px">REG_DWORD</div><div class="lt" style="left:617px;top:484px">0x00000001 (1)</div><svg class="ic" style="left:315px;top:504px" width="20" height="20" viewBox="0 0 20 20"><use href="#page"/><use href="#bin"/></svg><div class="lt" style="left:337px;top:505px">ShowCortanaBu...</div><div class="lt" style="left:467px;top:505px;letter-spacing:0.55px">REG_DWORD</div><div class="lt" style="left:617px;top:505px">0x00000001 (1)</div><svg class="ic" style="left:315px;top:525px" width="20" height="20" viewBox="0 0 20 20"><use href="#page"/><use href="#bin"/></svg><div class="lt" style="left:337px;top:526px">ShowInfoTip</div><div class="lt" style="left:467px;top:526px;letter-spacing:0.55px">REG_DWORD</div><div class="lt" style="left:617px;top:526px">0x00000001 (1)</div><svg class="ic" style="left:315px;top:546px" width="20" height="20" viewBox="0 0 20 20"><use href="#page"/><use href="#bin"/></svg><div class="lt" style="left:337px;top:547px">ShowStatusBar</div><div class="lt" style="left:467px;top:547px;letter-spacing:0.55px">REG_DWORD</div><div class="lt" style="left:617px;top:547px">0x00000001 (1)</div><svg class="ic" style="left:315px;top:567px" width="20" height="20" viewBox="0 0 20 20"><use href="#page"/><use href="#bin"/></svg><div class="lt" style="left:337px;top:568px">ShowSuperHidden</div><div class="lt" style="left:467px;top:568px;letter-spacing:0.55px">REG_DWORD</div><div class="lt" style="left:617px;top:568px">0x00000000 (0)</div><svg class="ic" style="left:315px;top:588px" width="20" height="20" viewBox="0 0 20 20"><use href="#page"/><use href="#bin"/></svg><div class="lt" style="left:337px;top:589px">ShowTypeOverlay</div><div class="lt" style="left:467px;top:589px;letter-spacing:0.55px">REG_DWORD</div><div class="lt" style="left:617px;top:589px">0x00000001 (1)</div><svg class="ic" style="left:315px;top:609px" width="20" height="20" viewBox="0 0 20 20"><use href="#page"/><use href="#bin"/></svg><div class="lt" style="left:337px;top:610px">Start_SearchFiles</div><div class="lt" style="left:467px;top:610px;letter-spacing:0.55px">REG_DWORD</div><div class="lt" style="left:617px;top:610px">0x00000002 (2)</div><svg class="ic" style="left:315px;top:630px" width="20" height="20" viewBox="0 0 20 20"><use href="#page"/><use href="#bin"/></svg><div class="lt" style="left:337px;top:631px">StartMenuInit</div><div class="lt" style="left:467px;top:631px;letter-spacing:0.55px">REG_DWORD</div><div class="lt" style="left:617px;top:631px">0x0000000d (13)</div><svg class="ic" style="left:315px;top:651px" width="20" height="20" viewBox="0 0 20 20"><use href="#page"/><use href="#bin"/></svg><div class="lt" style="left:337px;top:652px">StartMigratedBro...</div><div class="lt" style="left:467px;top:652px;letter-spacing:0.55px">REG_DWORD</div><div class="lt" style="left:617px;top:652px">0x00000001 (1)</div></div></div>
<div style="left:904px;top:680px;width:2px;height:2px;background:#a3a3a3"></div><div style="left:900px;top:684px;width:2px;height:2px;background:#a3a3a3"></div><div style="left:904px;top:684px;width:2px;height:2px;background:#a3a3a3"></div>


<!-- hammer -->
<svg style="left:785px;top:535px" width="70" height="60" viewBox="0 0 70 60">
<defs>
<filter id="hb" x="-20%" y="-20%" width="140%" height="140%"><feGaussianBlur stdDeviation="0.45"/></filter>
<filter id="hs" x="-50%" y="-200%" width="200%" height="500%"><feGaussianBlur stdDeviation="1.1"/></filter>
<linearGradient id="hm" x1="0.7" y1="0.15" x2="0.35" y2="0.75"><stop offset="0" stop-color="#6d6d6d"/><stop offset="0.18" stop-color="#e6e6e6"/><stop offset="0.5" stop-color="#c9c9c9"/><stop offset="1" stop-color="#b0b0b0"/></linearGradient>
<linearGradient id="hn" x1="0" y1="0" x2="1" y2="0.2"><stop offset="0" stop-color="#7d7d7d"/><stop offset="0.6" stop-color="#d4d4d4"/><stop offset="1" stop-color="#9a9a9a"/></linearGradient>
<linearGradient id="hsg" x1="0" y1="0" x2="1" y2="0"><stop offset="0" stop-color="#000" stop-opacity="0.9"/><stop offset="1" stop-color="#000" stop-opacity="0"/></linearGradient>
</defs>
<ellipse cx="26" cy="52.8" rx="13" ry="2.3" fill="url(#hsg)" filter="url(#hs)" transform="rotate(-6 26 52.8)"/>
<g filter="url(#hb)">
<path d="M36.6 21.8 L40.3 25.4 L33.6 33.6 L28.4 28.8 Z" fill="url(#hn)"/>
<path d="M28 5.3 C33 3.6 42 4.5 48 9 C51 11.5 53.5 14 54.8 17.5 L51 22.5 C48 23 43 24.5 40 26.5 L36.8 22.5 C39.5 19 40.2 15 38.6 12 C37 9.5 34 8.2 29 8.1 C27.3 7.9 26.8 5.8 28 5.3 Z" fill="url(#hm)"/>
<path d="M29 5.2 C36 3.5 44 5 50 10.5 C52 12.5 53.5 14.5 54.5 17" fill="none" stroke="#7a7a7a" stroke-width="0.8"/>
<path d="M50.5 19.5 L55 17 L58 21 L53 25.5 Z" fill="#b9b9b9"/><circle cx="56.6" cy="27" r="5.1" fill="#d4d4d4" stroke="#7c7c7c" stroke-width="0.9"/><ellipse cx="57.6" cy="27.6" rx="3.4" ry="2.2" transform="rotate(-50 57.6 27.6)" fill="#f6f6f6" stroke="#9a9a9a" stroke-width="0.6"/><path d="M52.5 24.5 L55.5 31" stroke="#8a8a8a" stroke-width="0.7"/><circle cx="28.6" cy="6.4" r="1.2" fill="#333"/>
<path d="M28 28.1 L33.6 33.7 L15.8 51.5 Q14.2 54.4 11.6 55.9 Q8.2 55.2 6 51.8 Q5.4 49.2 6.6 47.4 Q16 36.5 28 28.1 Z" fill="#222"/>
<path d="M27 29.5 Q16 37.5 8 47" stroke="#3a3a3a" stroke-width="0.7" fill="none"/>
</g>
</svg>
<!-- dialog -->
<div id="dshadow" style="left:349px;top:173px;width:440px;height:245px;border-radius:8px;box-shadow:0 30px 58px rgba(0,0,0,0.3),0 0 22px rgba(0,0,0,0.12)"></div>
<div id="dlg" style="left:349px;top:173px;width:440px;height:245px;border-radius:8px;background:#f0f0f0;overflow:hidden;border:1px solid #0078d4">
 <div style="left:-1px;top:-1px;width:440px;height:38px;background:#0078d4"></div>
</div>
<div class="dt" style="left:359px;top:181px;font-size:14.55px;color:#fff;line-height:21px">Edit <span style="letter-spacing:0.55px">DWOR</span>D (32-bit) Value</div>
<svg style="left:761px;top:186px" width="12" height="12" viewBox="0 0 12 12"><path d="M0.5 0.5 L11.5 11.5 M11.5 0.5 L0.5 11.5" stroke="#fff" stroke-width="1.1"/></svg>
<div class="dt" style="left:362px;top:222px;font-size:13.75px">Value name:</div>
<div style="left:363px;top:246px;width:412px;height:22px;background:#f3f3f3;border:1px solid #e2e2e2;border-bottom:1px solid #8a8a8a;border-radius:3px 3px 0 0"></div>
<div class="dt" style="left:365px;top:246px;font-size:13.4px">ShowInfo<span style="margin-left:1.6px">Tip</span></div>
<div class="dt" style="left:362px;top:280px;font-size:13.75px">Value data:</div>
<div style="left:362px;top:304px;width:184px;height:23px;background:#fff;border-bottom:2px solid #0067c0;border-radius:3px 3px 0 0"></div>
<div class="dt" style="left:365px;top:306px;font-size:14.6px;transform:scaleX(0.76);transform-origin:0 0">0</div>
<div style="left:372px;top:307px;width:1px;height:15px;background:#000"></div>
<div style="left:560px;top:290px;width:215px;height:67px;border:1px solid #d6d6d6;border-radius:2px"></div>
<div class="dt" style="left:567px;top:280px;padding:0 2px;background:#f0f0f0">Base</div>
<svg style="left:579px;top:304px" width="18" height="18" viewBox="0 0 18 18"><circle cx="9" cy="9" r="8" fill="#0067c0"/><circle cx="9" cy="9" r="3.2" fill="#fff"/></svg>
<div class="dt" style="left:599px;top:304px;font-size:14.2px">Hexadecimal</div>
<svg style="left:579px;top:330px" width="18" height="18" viewBox="0 0 18 18"><circle cx="9" cy="9" r="7.5" fill="#f0f0f0" stroke="#5c5c5c" stroke-width="1"/></svg>
<div class="dt" style="left:599px;top:330px;font-size:14.3px">Decimal</div>
<div style="left:567px;top:374px;width:98px;height:26px;background:#e0eef9;border:1px solid #0067c0;border-radius:4px"></div>
<div class="dt" style="left:567px;top:379px;width:98px;text-align:center;font-size:13.7px">OK</div>
<div style="left:677px;top:374px;width:98px;height:26px;background:#fdfdfd;border:1px solid #d0d0d0;border-radius:4px"></div>
<div class="dt" style="left:677px;top:379px;width:98px;text-align:center;font-size:14.2px">Cancel</div>
</body></html>
